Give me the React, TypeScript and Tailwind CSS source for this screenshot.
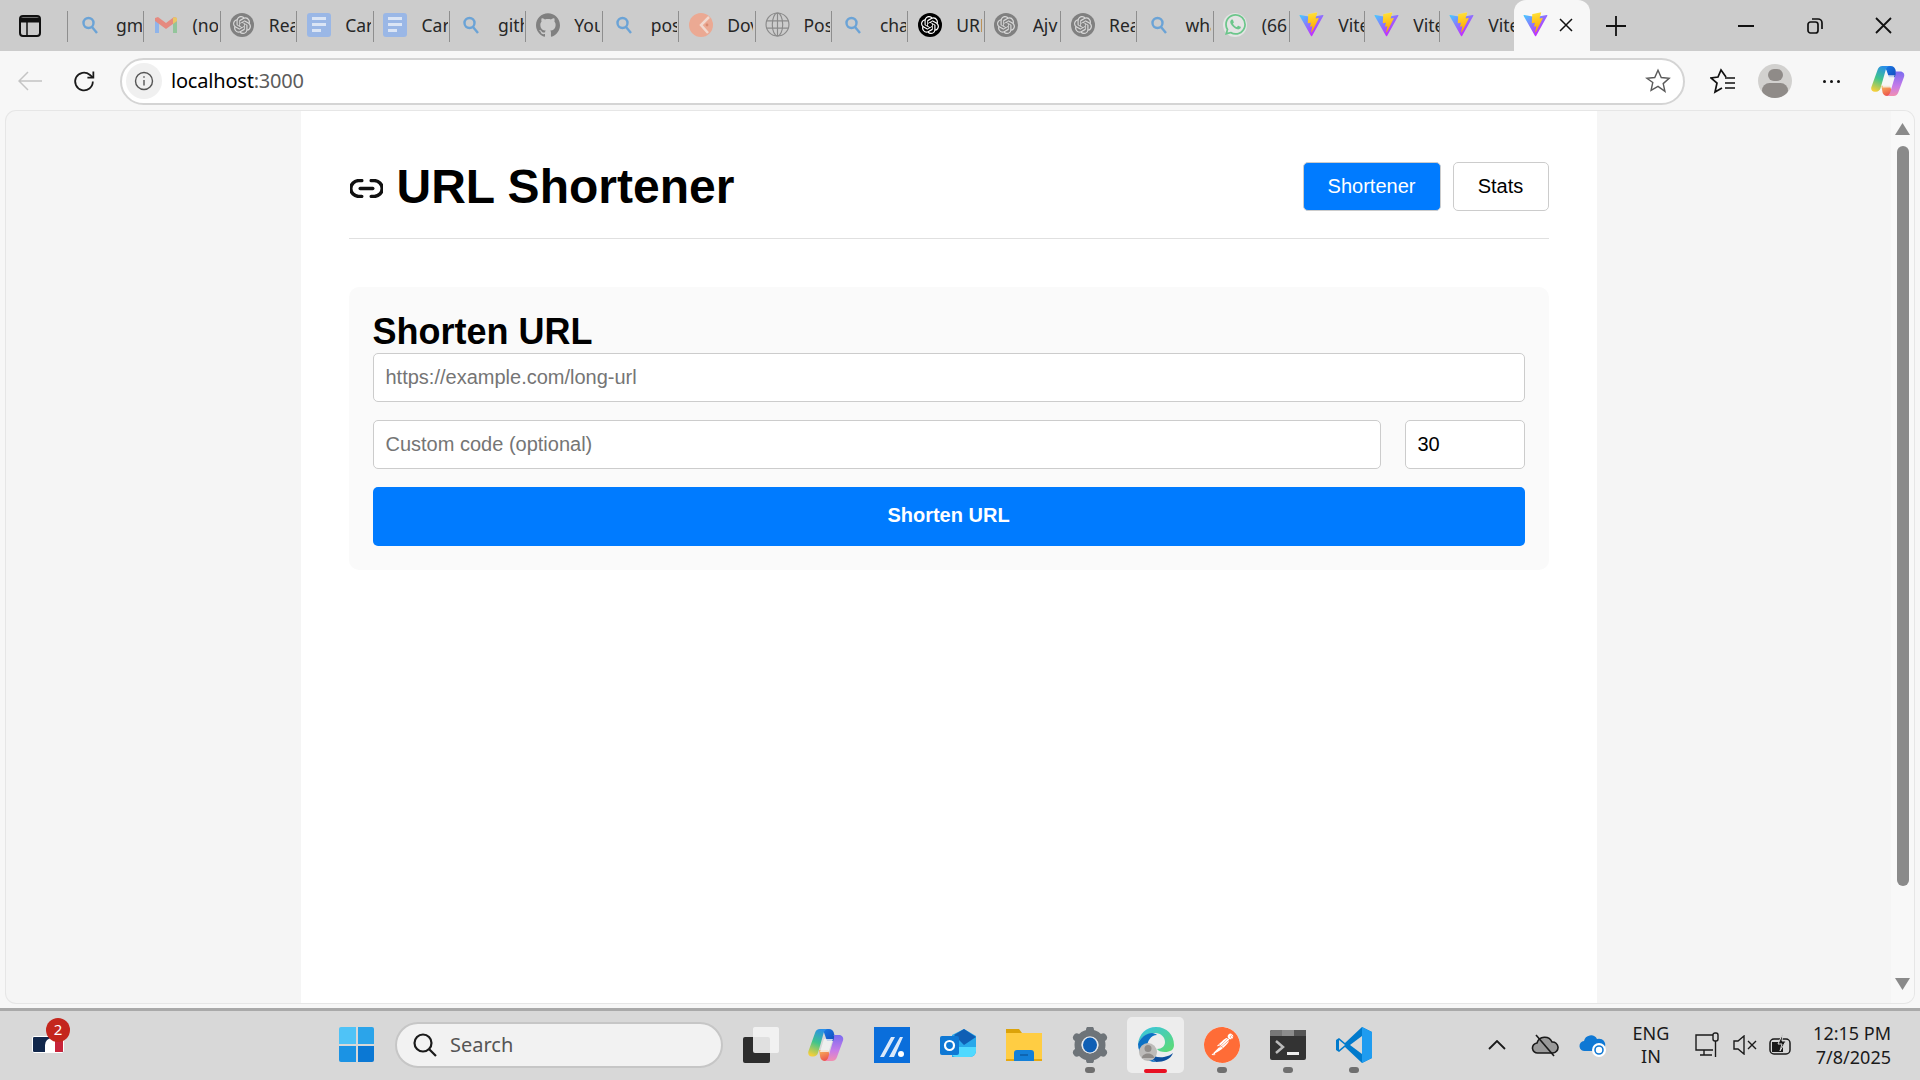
import React from "react";
import { SiOpenai, SiGithub, SiWhatsapp, SiPostman } from "react-icons/si";

const Mag = () => (
  <svg width="18" height="20" viewBox="0 0 18 20" fill="none" stroke="#6ba3d6" strokeWidth="2.4"><circle cx="7.5" cy="8" r="5" /><path d="M11 12l5 6" /></svg>
);
const Gmail = () => (
  <svg width="24" height="24" viewBox="0 0 24 24"><path d="M1 5v15h4V9z" fill="#8fb4ea" /><path d="M23 5v15h-4V9z" fill="#93c59b" /><path d="M1 5l3-1 8 6 8-6 3 1v3l-11 8L1 8z" fill="#e58a80" /><path d="M20 4l3 1v3l-4 3V5z" fill="#e9c766" /></svg>
);
const Gpt = ({ dark }: { dark?: boolean }) => (
  <span className={`flex h-[24px] w-[24px] items-center justify-center rounded-full ${dark ? "bg-black" : "bg-[#808080]"}`}>
    <SiOpenai size={18} color={dark ? "#ffffff" : "#d8d8d8"} />
  </span>
);
const Docs = () => (
  <span className="flex h-[24px] w-[24px] flex-col justify-center gap-[3px] rounded-[3px] bg-[#9ab7e6] px-[5px]">
    <span className="h-[3px] w-full bg-[#dbe5f5]" />
    <span className="h-[3px] w-full bg-[#dbe5f5]" />
    <span className="h-[3px] w-[9px] bg-[#dbe5f5]" />
  </span>
);
const Orange = () => (
  <svg width="24" height="24" viewBox="0 0 24 24"><circle cx="12" cy="12" r="12" fill="#eba993" /><path d="M20 4l-8 8 7 8" fill="none" stroke="#f1d9cf" strokeWidth="2.5" /><circle cx="18" cy="12" r="1.4" fill="#d98a70" /></svg>
);
const Globe = () => (
  <svg width="25" height="25" viewBox="0 0 24 24" fill="none" stroke="#8a8a8a" strokeWidth="1.1"><circle cx="12" cy="12" r="11" /><ellipse cx="12" cy="12" rx="5" ry="11" /><path d="M12 1v22M1.6 8.5h20.8M1.6 15.5h20.8" /></svg>
);
const Whats = () => (
  <span className="flex h-[24px] w-[24px] items-center justify-center rounded-full bg-[#e4e4e4]">
    <SiWhatsapp size={21} color="#6cc68b" />
  </span>
);
const Vite = () => (
  <svg width="25" height="25" viewBox="0 0 410 404">
    <defs>
      <linearGradient id="va" x1="6" y1="33" x2="235" y2="344" gradientUnits="userSpaceOnUse"><stop stopColor="#41D1FF" /><stop offset="1" stopColor="#BD34FE" /></linearGradient>
      <linearGradient id="vb" x1="194" y1="8" x2="236" y2="293" gradientUnits="userSpaceOnUse"><stop stopColor="#FFEA83" /><stop offset=".08" stopColor="#FFDD35" /><stop offset="1" stopColor="#FFA800" /></linearGradient>
    </defs>
    <path d="M399.6 59.5 215 389.7c-3.8 6.8-13.6 6.9-17.5.1L9.3 59.5c-4.2-7.4 2.1-16.3 10.5-14.8L204.6 77.7c1.2.2 2.4.2 3.5 0l181-33c8.3-1.5 14.7 7.3 10.5 14.8Z" fill="url(#va)" />
    <path d="M292.9 1.6 156.2 28.4c-2.2.4-3.9 2.3-4 4.6l-8.4 142.1c-.2 3.3 2.9 5.9 6.1 5.2l38-8.8c3.6-.8 6.8 2.3 6.1 5.9l-11.3 55.3c-.8 3.7 2.7 6.9 6.3 5.8l23.5-7.1c3.6-1.1 7.1 2.1 6.3 5.8l-18 87c-1.1 5.4 6.1 8.4 9.1 3.7l2-3.1 111.3-222.2c1.9-3.7-1.3-8-5.4-7.2l-39.1 7.5c-3.7.7-6.8-2.7-5.8-6.3l25.5-88.5c1-3.7-2.1-7.1-5.9-6.4Z" fill="url(#vb)" />
  </svg>
);

const tabs: [React.ReactNode, string][] = [
  [<Mag />, "gm"],
  [<Gmail />, "(no"],
  [<Gpt />, "Rea"],
  [<Docs />, "Car"],
  [<Docs />, "Car"],
  [<Mag />, "gith"],
  [<SiGithub size={24} color="#808080" />, "You"],
  [<Mag />, "pos"],
  [<Orange />, "Dov"],
  [<Globe />, "Pos"],
  [<Mag />, "cha"],
  [<Gpt dark />, "URL"],
  [<Gpt />, "Ajv"],
  [<Gpt />, "Rea"],
  [<Mag />, "wha"],
  [<Whats />, "(66"],
  [<Vite />, "Vite"],
  [<Vite />, "Vite"],
  [<Vite />, "Vite"],
];

function Tab({ icon, label, narrow }: { icon: React.ReactNode; label: string; narrow: boolean }) {
  return (
    <div className={`mt-[2px] flex h-[31px] shrink-0 items-center border-l border-[#8e8e8e] pl-[9px] ${narrow ? "w-[75px]" : "w-[76.4px]"}`}>
      <span className="-mt-[4px] flex w-[25px] shrink-0 justify-center">{icon}</span>
      <span className="-mt-[4px] ml-[14px] w-[26px] overflow-hidden whitespace-nowrap text-[17.5px] leading-[24px] text-[#262626]">{label}</span>
    </div>
  );
}

function TabBar() {
  return (
    <div className="flex h-[51px] shrink-0 items-center bg-[#cccccc]">
      <div className="flex w-[67px] shrink-0 justify-start pl-[19px]">
        <svg width="22" height="22" viewBox="0 0 22 22" fill="none"><rect x="1" y="1" width="20" height="20" rx="3" stroke="#111" strokeWidth="2" /><path d="M1 5h20" stroke="#111" strokeWidth="5" /><path d="M8 6v15" stroke="#111" strokeWidth="1.5" /></svg>
      </div>
      {tabs.map(([icon, label], i) => (
        <Tab key={i} icon={icon} label={label} narrow={i >= 16} />
      ))}
      <div className="flex h-[51px] w-[76px] shrink-0 items-center justify-start gap-[11px] self-end rounded-t-[12px] bg-[#f7f7f7] pb-[2px] pl-[9px]">
        <Vite />
        <svg width="14" height="14" viewBox="0 0 14 14" stroke="#111" strokeWidth="1.5"><path d="M1 1l12 12M13 1L1 13" /></svg>
      </div>
      <svg className="ml-[15px]" width="22" height="22" viewBox="0 0 22 22" stroke="#111" strokeWidth="1.8"><path d="M11 1v20M1 11h20" /></svg>
      <svg className="ml-[111px]" width="16" height="4" viewBox="0 0 16 4" stroke="#111" strokeWidth="2"><path d="M0 2h16" /></svg>
      <svg className="ml-[53px]" width="16" height="16" viewBox="0 0 16 16" fill="none" stroke="#111" strokeWidth="1.7"><rect x="1" y="4" width="10" height="11" rx="2.5" /><path d="M5 1h6a4 4 0 0 1 4 4v6" /></svg>
      <svg className="ml-[52px]" width="17" height="17" viewBox="0 0 17 17" stroke="#111" strokeWidth="1.8"><path d="M1 1l15 15M16 1L1 16" /></svg>
    </div>
  );
}

function Copilot({ size }: { size: number }) {
  const a = `ca${size}`;
  const b = `cb${size}`;
  const c = `cc${size}`;
  const d = `cd${size}`;
  return (
    <svg width={size} height={size} viewBox="0 0 36 36">
      <defs>
        <linearGradient id={a} x1="0.6" y1="0" x2="0.3" y2="1"><stop stopColor="#2a8fe8" /><stop offset=".5" stopColor="#3fc48c" /><stop offset="1" stopColor="#f5cf3a" /></linearGradient>
        <linearGradient id={b} x1="0" y1="0" x2="1" y2="1"><stop stopColor="#1a7ae6" /><stop offset="1" stopColor="#1248b8" /></linearGradient>
        <linearGradient id={c} x1="0.5" y1="0" x2="0.5" y2="1"><stop stopColor="#7a6cf0" /><stop offset=".6" stopColor="#c77be8" /><stop offset="1" stopColor="#f28fb0" /></linearGradient>
        <linearGradient id={d} x1="0.3" y1="0" x2="0.7" y2="1"><stop stopColor="#f7b05a" /><stop offset="1" stopColor="#ec4a4a" /></linearGradient>
      </defs>
      <path d="M18 2h3c2.500 0 4 1.500 4.700 3.500L28 14h-9l-3-8.500C15.500 3.500 16.500 2 18 2Z" fill={`url(#${b})`} />
      <path d="M11 23h9l2.500 7.500c.7 2-.5 3.500-2.500 3.500h-3c-2.500 0-4-1.500-4.700-3.500Z" fill={`url(#${d})`} />
      <path d="M12 2h8c-2 0-3.500 1.500-4.200 3.500L10 26c-.7 2-2.500 3.500-4.500 3.500H4c-3 0-4.500-2.500-3.500-5.500L7 6c.8-2.500 2.500-4 5-4Z" fill={`url(#${a})`} />
      <path d="M25 8h6c3 0 5 2.500 4 5.500L29 30c-.8 2.500-2.500 4-5 4h-8c2 0 3.500-1.500 4.200-3.500L26 11c.4-1.500 0-3-1-3Z" fill={`url(#${c})`} />
      <path d="M16 12h9l-4.500 13H12Z" fill="#f5f5f5" opacity=".8" />
    </svg>
  );
}

function Toolbar() {
  return (
    <div className="flex h-[60px] shrink-0 items-center bg-[#f7f7f7]">
      <svg className="ml-[18px]" width="24" height="20" viewBox="0 0 24 20" fill="none" stroke="#c4c4c4" strokeWidth="1.5"><path d="M24 10H1M10 1l-9 9 9 9" /></svg>
      <svg className="ml-[30px]" width="25" height="25" viewBox="0 0 24 24" fill="none" stroke="#1a1a1a" strokeWidth="1.7"><path d="M20 12a8.5 8.5 0 1 1-3-6.5L20 8" /><path d="M20.5 2.5V8.2h-5.7" /></svg>
      <div className="ml-[23px] flex h-[47px] w-[1565px] items-center rounded-full border-2 border-[#d4d4d4] bg-white pl-[4px]">
        <span className="flex h-[36px] w-[36px] items-center justify-center rounded-full bg-[#f0f0f0]">
          <svg width="20" height="20" viewBox="0 0 20 20" fill="none" stroke="#555" strokeWidth="1.4"><circle cx="10" cy="10" r="8.5" /><path d="M10 9v5.5M10 5.2v1.6" /></svg>
        </span>
        <span className="ml-[9px] text-[20px] text-black" style={{ letterSpacing: "-0.2px" }}>localhost<span className="text-[#5c5c5c]">:3000</span></span>
        <svg className="ml-auto mr-[12px]" width="26" height="26" viewBox="0 0 24 24" fill="none" stroke="#5a5a5a" strokeWidth="1.3"><path d="M12 2l3 6.8 7.3.7-5.5 4.9 1.6 7.2L12 17l-6.4 3.6 1.6-7.2L1.7 9.5 9 8.8z" /></svg>
      </div>
      <svg className="ml-[25px]" width="26" height="26" viewBox="0 0 26 26" fill="none" stroke="#111" strokeWidth="1.7"><path d="M16 9l-5-7-3 7-7 1 6 5-2 9 7-4" /><path d="M15 10h10M15 15h10M15 20h10" /></svg>
      <span className="ml-[22px] flex h-[34px] w-[34px] flex-col items-center overflow-hidden rounded-full bg-[#d2d1cf]">
        <span className="mt-[5px] h-[15px] w-[15px] rounded-full bg-[#8f8b88]" />
        <span className="mt-[2px] h-[20px] w-[26px] rounded-full bg-[#8f8b88]" />
      </span>
      <span className="ml-[31px] flex gap-[4px]">
        <span className="h-[3px] w-[3px] rounded-full bg-[#111]" />
        <span className="h-[3px] w-[3px] rounded-full bg-[#111]" />
        <span className="h-[3px] w-[3px] rounded-full bg-[#111]" />
      </span>
      <span className="ml-[31px]"><Copilot size={34} /></span>
    </div>
  );
}

function Field({ className, placeholder, value }: { className: string; placeholder?: string; value?: string }) {
  return (
    <input
      readOnly
      placeholder={placeholder}
      defaultValue={value}
      className={`h-[49px] rounded-[5px] border border-[#cccccc] bg-white px-[12px] text-[20px] text-black outline-none placeholder:text-[#757575] ${className}`}
    />
  );
}

function Page() {
  return (
    <div className="mx-auto h-full w-[1296px] bg-white px-[48px] pt-[50px]">
      <header className="flex h-[78px] items-start justify-between border-b border-[#e0e0e0] pt-[1px]">
        <h1 className="mt-[1px] flex h-[48px] items-center text-[48px] font-bold leading-[48px] text-black">
          <svg className="ml-[1px] mr-[14px] mt-[2px]" width="33" height="19" viewBox="1.5 6 21 12" fill="none" stroke="#111" strokeWidth="2.2" strokeLinecap="round"><path d="M9 17H7A5 5 0 0 1 7 7h2" /><path d="M15 7h2a5 5 0 1 1 0 10h-2" /><path d="M8 12h8" /></svg>
          URL Shortener
        </h1>
        <nav className="flex gap-[12px]">
          <button className="h-[49px] w-[138px] rounded-[5px] border border-[#cccccc] bg-[#007bff] pb-[1px] text-[20px] text-white">Shortener</button>
          <button className="h-[49px] w-[96px] rounded-[5px] border border-[#cccccc] bg-white pb-[1px] text-[20px] text-black">Stats</button>
        </nav>
      </header>
      <section className="mt-[48px] h-[283px] rounded-[10px] bg-[#fafafa] p-[24px]">
        <h2 className="h-[42px] text-[36px] font-bold leading-[42px] text-black">Shorten URL</h2>
        <Field className="block w-full" placeholder="https://example.com/long-url" />
        <div className="mt-[18px] flex gap-[24px]">
          <Field className="min-w-0 flex-1" placeholder="Custom code (optional)" />
          <Field className="w-[120px]" value="30" />
        </div>
        <button className="mt-[18px] h-[59px] w-full rounded-[5px] bg-[#007bff] pb-[3px] text-[20px] font-bold text-white">Shorten URL</button>
      </section>
    </div>
  );
}

function Scrollbar() {
  return (
    <div className="flex w-[23px] shrink-0 flex-col items-center bg-[#f8f8f8] pt-[12px]">
      <svg width="15" height="12" viewBox="0 0 15 12"><path d="M7.5 0L15 12H0z" fill="#8a8a8a" /></svg>
      <div className="mt-[11px] h-[740px] w-[12px] rounded-full bg-[#8a8a8a]" />
      <svg className="mt-[92px]" width="15" height="12" viewBox="0 0 15 12"><path d="M7.5 12L15 0H0z" fill="#8a8a8a" /></svg>
    </div>
  );
}

function TaskIcon({ children, dot, className }: { children: React.ReactNode; dot?: boolean; className: string }) {
  return (
    <div className={`relative flex h-[36px] w-[36px] shrink-0 items-center justify-center ${className}`}>
      {children}
      {dot && <span className="absolute left-[13px] top-[40px] h-[6px] w-[10px] rounded-full bg-[#6f6f6f]" />}
    </div>
  );
}

function Taskbar() {
  return (
    <div className="flex h-[72px] shrink-0 items-center border-t-[3px] border-[#a9a9a9] bg-[#d8d8d8] pb-[2px]">
      <div className="relative ml-[32px] h-[17px] w-[32px] shrink-0 overflow-hidden rounded-[2px] border border-white bg-[#12284c]">
        <span className="absolute bottom-0 left-[12px] h-[14px] w-[14px] rounded-t-full bg-white" />
        <span className="absolute bottom-0 right-0 h-[17px] w-[8px] bg-[#c8243a]" />
      </div>
      <span className="relative z-10 -ml-[18px] -mt-[30px] flex h-[24px] w-[24px] shrink-0 items-center justify-center rounded-full bg-[#c4261d] text-[15px] text-white">2</span>
      <div className="ml-[269px] grid h-[35px] w-[35px] shrink-0 grid-cols-2 gap-[2px]">
        <span className="rounded-tl-[2px] bg-[#4fc3f7]" /><span className="rounded-tr-[2px] bg-[#2ba4ea]" />
        <span className="rounded-bl-[2px] bg-[#1b93e4]" /><span className="rounded-br-[2px] bg-[#0b78d4]" />
      </div>
      <div className="ml-[21px] flex h-[46px] w-[328px] shrink-0 items-center rounded-full border-2 border-[#c6c6c6] bg-[#f2f2f2] pl-[15px]">
        <svg width="26" height="26" viewBox="0 0 26 26" fill="none" stroke="#1a1a1a" strokeWidth="2.2"><circle cx="11" cy="11" r="8.5" /><path d="M17 17l7 7" /></svg>
        <span className="ml-[12px] text-[20px] text-[#555555]">Search</span>
      </div>
      <div className="relative ml-[20px] h-[36px] w-[36px] shrink-0">
        <span className="absolute bottom-0 left-0 h-[26px] w-[27px] rounded-[2px] bg-[#2d2d2d]" />
        <span className="absolute right-0 top-0 h-[26px] w-[26px] rounded-[2px] bg-[#f4f4f4]/90" />
      </div>
      <TaskIcon className="ml-[29px]"><Copilot size={36} /></TaskIcon>
      <TaskIcon className="ml-[30px]">
        <svg width="36" height="36" viewBox="0 0 36 36"><rect width="36" height="36" fill="#0a6edb" /><path d="M6 30l11-20h4L10 30zM15 30l11-20h3l-9 20z" fill="#dbe9fa" /><circle cx="27" cy="27" r="3" fill="#fff" /></svg>
      </TaskIcon>
      <TaskIcon className="ml-[30px]">
        <svg width="36" height="36" viewBox="0 0 36 36"><path d="M12 8L24 2l12 7v15a6 6 0 0 1-6 6H12z" fill="#28a8ea" /><path d="M14 8l10-6 12 8-12 8z" fill="#0f5fb5" /><path d="M12 20h24v4a6 6 0 0 1-6 6H16a4 4 0 0 1-4-4z" fill="#50d9ff" /><rect x="0" y="9" width="19" height="19" rx="2" fill="#0f78d4" /><circle cx="9.5" cy="18.5" r="4.5" fill="none" stroke="#fff" strokeWidth="2.2" /></svg>
      </TaskIcon>
      <TaskIcon className="ml-[30px]">
        <svg width="36" height="36" viewBox="0 0 36 36"><path d="M0 2h13l3 4h20v6H0z" fill="#dca30a" /><rect y="6" width="36" height="28" fill="#ffcd43" /><rect y="32" width="36" height="2" fill="#e8a80f" /><path d="M8 26a3 3 0 0 1 3-3h14a3 3 0 0 1 3 3v8H8z" fill="#1480d8" /><path d="M14 28h8" stroke="#0c5da6" strokeWidth="1.5" /></svg>
      </TaskIcon>
      <TaskIcon className="ml-[30px]" dot>
        <svg width="36" height="36" viewBox="0 0 36 36"><path d="M18 5v-2M18 31v2M6.700 11.500L5 10.500M29.300 24.500L31 25.500M29.300 11.500L31 10.500M6.700 24.500L5 25.500" stroke="#6e7479" strokeWidth="8" strokeLinecap="round" /><circle cx="18" cy="18" r="12" fill="none" stroke="#6e7479" strokeWidth="7" /><circle cx="18" cy="18" r="8.500" fill="#e4e8ec" /><ellipse cx="18" cy="18" rx="7" ry="7.500" fill="#0f5fb5" /></svg>
      </TaskIcon>
      <div className="relative ml-[19px] flex h-[56px] w-[57px] shrink-0 items-center justify-center rounded-[5px] bg-[#ededed]">
        <svg width="36" height="36" viewBox="0 0 36 36">
          <defs><linearGradient id="eg" x1="0" y1="0" x2="1" y2="1"><stop stopColor="#36c3e8" /><stop offset="1" stopColor="#5fdc6e" /></linearGradient></defs>
          <path d="M18 0c11 0 18 8 18 18 0 5-4 7-9 7-4 0-7-1-8-3 5 0 8-3 8-7 0-5-4-9-10-9C8 6 2 11 0 17 1 7 8 0 18 0Z" fill="url(#eg)" />
          <path d="M0 17c2-6 8-11 14-11 2 0 4 1 5 2-6 0-10 6-10 13 0 6 4 11 9 14C8 35 0 27 0 17Z" fill="#0c71c4" />
          <path d="M18 35c-3-2-6-5-7-9 3 3 9 5 15 4 4-1 7-2 9-4-2 6-9 9-17 9Z" fill="#0d4f9e" />
          <circle cx="10" cy="25" r="9" fill="#bdbbb9" /><circle cx="10" cy="21.500" r="3.500" fill="#8f8b88" /><path d="M4 31c0-3 3-4.500 6-4.500s6 1.500 6 4.500z" fill="#8f8b88" />
        </svg>
        <span className="absolute bottom-0 left-[17px] h-[4px] w-[23px] rounded-full bg-[#e81123]" />
      </div>
      <TaskIcon className="ml-[20px]" dot>
        <span className="flex h-[36px] w-[36px] items-center justify-center rounded-full bg-white"><SiPostman size={36} color="#ff6c37" /></span>
      </TaskIcon>
      <TaskIcon className="ml-[30px]" dot>
        <svg width="36" height="36" viewBox="0 0 36 36"><rect y="3" width="36" height="30" rx="2" fill="#333333" /><path d="M0 5a2 2 0 0 1 2-2h10v6H0z" fill="#777" /><rect x="12" y="3" width="12" height="6" fill="#8c8c8c" /><rect x="24" y="3" width="12" height="6" fill="#555" /><path d="M6 14l7 6-7 6" fill="none" stroke="#bbb" strokeWidth="2.5" /><rect x="17" y="25" width="12" height="3" fill="#eee" /></svg>
      </TaskIcon>
      <TaskIcon className="ml-[30px]" dot>
        <svg width="36" height="36" viewBox="0 0 36 36"><path d="M26 0l10 5v26l-10 5L9 20l-6 5-3-2v-10l3-2 6 5z" fill="#007acc" /><path d="M26 0l10 5v26l-10 5z" fill="#1f9cf0" /><path d="M26 9L14 18l12 9z" fill="#d8d8d8" /><path d="M3 13l6 5-6 5z" fill="#d8d8d8" /></svg>
      </TaskIcon>
      <svg className="ml-[116px]" width="18" height="10" viewBox="0 0 18 10" fill="none" stroke="#1a1a1a" strokeWidth="1.8"><path d="M1 9l8-8 8 8" /></svg>
      <svg className="ml-[25px]" width="28" height="24" viewBox="0 0 28 24" fill="none" stroke="#1a1a1a" strokeWidth="1.6"><path d="M7 20a5 5 0 0 1-1-10 8 8 0 0 1 15-1 5.500 5.500 0 0 1 1 11z" fill="#9a9a9a" /><path d="M5 2l18 21" /></svg>
      <svg className="ml-[20px]" width="28" height="24" viewBox="0 0 28 24"><path d="M6 18a5 5 0 0 1-1-10 7 7 0 0 1 13-2 6 6 0 0 1 4 12z" fill="#0f78d4" /><circle cx="20" cy="17" r="7" fill="#fff" /><circle cx="20" cy="17" r="4" fill="none" stroke="#0f78d4" strokeWidth="1.6" /></svg>
      <div className="ml-[25px] flex w-[38px] shrink-0 flex-col items-center text-[18px] leading-[23px] text-[#1a1a1a]"><span>ENG</span><span>IN</span></div>
      <svg className="ml-[25px]" width="26" height="26" viewBox="0 0 26 26" fill="none" stroke="#1a1a1a" strokeWidth="1.4"><path d="M18 3H1v15h17M5 23h12M9 18v5" /><rect x="18" y="1" width="5" height="8" rx="2" /><path d="M20.500 9v16" /></svg>
      <svg className="ml-[12px]" width="24" height="20" viewBox="0 0 24 20" fill="none" stroke="#1a1a1a" strokeWidth="1.4"><path d="M1 6h4l6-5v18l-6-5H1zM15 6l8 8M23 6l-8 8" /></svg>
      <svg className="ml-[12px]" width="24" height="24" viewBox="0 0 24 24" fill="none"><rect x="1" y="6" width="20" height="15" rx="4" stroke="#1a1a1a" strokeWidth="1.5" /><rect x="3" y="9" width="11" height="10" fill="#1a1a1a" /><path d="M14 0l-5 11h4l-2 7 6-10h-4z" fill="#1a1a1a" stroke="#d8d8d8" /></svg>
      <div className="ml-[15px] flex w-[83px] shrink-0 flex-col items-end text-[18px] leading-[24px] text-[#1a1a1a]"><span>12:15 PM</span><span>7/8/2025</span></div>
    </div>
  );
}

export default function App() {
  return (
    <div className="flex h-[1080px] w-[1920px] flex-col overflow-hidden bg-[#f7f7f7]" style={{ fontFamily: "'Liberation Sans', Arial, sans-serif" }}>
      <div style={{ fontFamily: "'Noto Sans', sans-serif" }}><TabBar /><Toolbar /></div>
      <div className="flex min-h-0 flex-1 pb-[5px] pl-[6px] pr-[6px]">
        <div className="flex min-w-0 flex-1 overflow-hidden rounded-[10px] bg-[#f5f5f5] shadow-[0_0_0_1px_#e6e6e6]">
          <div className="min-w-0 flex-1"><Page /></div>
          <Scrollbar />
        </div>
      </div>
      <div style={{ fontFamily: "'Noto Sans', sans-serif" }}><Taskbar /></div>
    </div>
  );
}
